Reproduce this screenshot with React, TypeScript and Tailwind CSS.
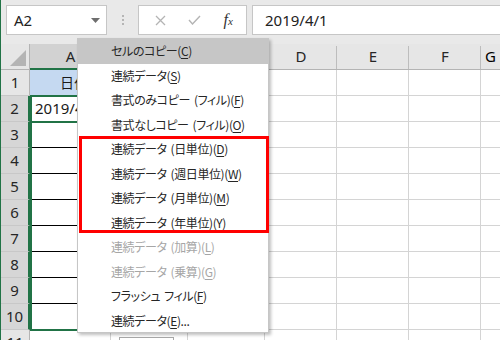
import React from "react";

const UI = "font-['Noto_Sans','Open_Sans',sans-serif]";
const JP = "font-['Noto_Sans_CJK_JP','Noto_Sans',sans-serif] [font-feature-settings:'palt']";

type Item = { pre: string; key: string; post?: string; disabled?: boolean; active?: boolean };

const items: Item[] = [
  { pre: "セルのコピー(", key: "C", post: ")", active: true },
  { pre: "連続データ(", key: "S", post: ")" },
  { pre: "書式のみコピー (フィル)(", key: "F", post: ")" },
  { pre: "書式なしコピー (フィル)(", key: "O", post: ")" },
  { pre: "連続データ (日単位)(", key: "D", post: ")" },
  { pre: "連続データ (週日単位)(", key: "W", post: ")" },
  { pre: "連続データ (月単位)(", key: "M", post: ")" },
  { pre: "連続データ (年単位)(", key: "Y", post: ")" },
  { pre: "連続データ (加算)(", key: "L", post: ")", disabled: true },
  { pre: "連続データ (乗算)(", key: "G", post: ")", disabled: true },
  { pre: "フラッシュ フィル(", key: "F", post: ")" },
  { pre: "連続データ(", key: "E", post: ")..." },
];

function Pre({ text }: { text: string }) {
  const parts = text.split(" ");
  return (
    <>
      {parts.map((p, i) => (
        <React.Fragment key={i}>
          {i > 0 && <span className="inline-block w-[4px]" />}
          {p}
        </React.Fragment>
      ))}
    </>
  );
}

function Row({ n }: { n: number }) {
  const sel = n >= 2 && n <= 10;
  const isA1 = n === 1;
  const aBlack = n >= 2 && n <= 9;
  return (
    <div className="flex h-[26px] shrink-0">
      <div
        className={`w-[29px] shrink-0 flex items-center justify-center border-b border-[#c8c8c8] text-[15px] text-[#262626] ${UI} ${
          sel ? "bg-[#d6d6d6] border-r-2 border-r-[#217346]" : "bg-[#e6e6e6] border-r border-r-[#b4b4b4]"
        }`}
      >
        {n}
      </div>
      <div
        className={`w-[81px] shrink-0 border-r border-[#d4d4d4] flex items-center ${
          isA1 ? "bg-[#c5d9f1] border-b border-b-[#d4d4d4] justify-center" : "bg-white"
        } ${aBlack ? "border-b border-b-black" : n > 9 ? "border-b border-b-[#d4d4d4]" : ""} ${UI} text-[15px] text-[#1a1a1a]`}
      >
        {isA1 ? <span className={JP + " text-[14px] pl-[8px]"}>日付</span> : n === 2 ? <span className="pl-[5px]">2019/4/1</span> : null}
      </div>
      <div className="w-[77px] shrink-0 border-r border-b border-[#d4d4d4] bg-white" />
      <div className="w-[77px] shrink-0 border-r border-b border-[#d4d4d4] bg-white" />
      <div className="w-[72px] shrink-0 border-r border-b border-[#d4d4d4] bg-white" />
      <div className="w-[72px] shrink-0 border-r border-b border-[#d4d4d4] bg-white" />
      <div className="w-[72px] shrink-0 border-r border-b border-[#d4d4d4] bg-white" />
      <div className="flex-1 border-b border-[#d4d4d4] bg-white" />
    </div>
  );
}

function ColHead({ w, label, sel }: { w: string; label: string; sel?: boolean }) {
  return (
    <div
      className={`${w} shrink-0 flex items-center justify-center text-[15px] text-[#262626] ${UI} relative ${
        sel ? "bg-[#d2d2d2] border-b-2 border-b-[#217346]" : "bg-[#e6e6e6] border-b border-b-[#b4b4b4]"
      }`}
    >
      <div className="absolute right-0 top-[2px] bottom-0 w-px bg-[#bdbdbd]" />
      {label}
    </div>
  );
}

export default function App() {
  return (
    <div className="relative w-[500px] h-[340px] overflow-hidden bg-white border-l border-[#217346]">
      {/* top bar */}
      <div className="h-[44px] bg-[#e9e9e9] flex items-start pt-[5px] pl-[5px]">
        <div className="w-[101px] h-[30px] bg-white border border-[#c6c6c6] flex items-center justify-between pl-[7px] pr-[6px]">
          <span className={`${UI} text-[15px] text-[#222]`}>A2</span>
          <svg width="9" height="5" viewBox="0 0 9 5">
            <path d="M0 0 L9 0 L4.5 5 Z" fill="#6e6e6e" />
          </svg>
        </div>
        <div className="w-[31px] h-[30px] flex flex-col items-center justify-center gap-[2px]">
          <div className="w-[2px] h-[2px] bg-[#b5b5b5]" />
          <div className="w-[2px] h-[2px] bg-[#b5b5b5]" />
          <div className="w-[2px] h-[2px] bg-[#b5b5b5]" />
        </div>
        <div className="w-[109px] h-[30px] bg-white border border-[#c6c6c6] flex items-center">
          <div className="w-[40px] flex justify-center pl-[4px]">
            <svg width="11" height="11" viewBox="0 0 11 11">
              <path d="M1 1 L10 10 M10 1 L1 10" stroke="#b4b4b4" strokeWidth="1.3" />
            </svg>
          </div>
          <div className="w-[32px] flex justify-center">
            <svg width="13" height="10" viewBox="0 0 13 10">
              <path d="M1 5 L4.5 9 L12 1" stroke="#b4b4b4" strokeWidth="1.4" fill="none" />
            </svg>
          </div>
          <div className="w-[36px] flex justify-center">
            <span className="font-['Liberation_Serif',serif] italic text-[16px] text-[#333] leading-none">
              f<span className="text-[11px]">x</span>
            </span>
          </div>
        </div>
        <div className="flex-1 ml-[5px] -mr-[4px] h-[30px] bg-white border border-[#c6c6c6] flex items-center pl-[12px]">
          <span className={`${UI} text-[15px] text-[#222]`}>2019/4/1</span>
        </div>
      </div>

      {/* column header */}
      <div className="flex h-[26px]">
        <div className="w-[29px] shrink-0 bg-[#e6e6e6] border-b border-r border-[#b4b4b4] relative">
          <svg className="absolute left-[9px] bottom-[3px]" width="16" height="16" viewBox="0 0 16 16">
            <path d="M16 0 L16 16 L0 16 Z" fill="#b4b4b4" />
          </svg>
        </div>
        <ColHead w="w-[81px]" label="A" sel />
        <ColHead w="w-[77px]" label="B" />
        <ColHead w="w-[77px]" label="C" />
        <ColHead w="w-[72px]" label="D" />
        <ColHead w="w-[72px]" label="E" />
        <ColHead w="w-[72px]" label="F" />
        <div className="flex-1 bg-[#e6e6e6] border-b border-b-[#b4b4b4] flex items-center justify-center text-[15px]">G</div>
      </div>

      {Array.from({ length: 11 }, (_, i) => (
        <Row key={i} n={i + 1} />
      ))}

      {/* selection border A2:A10 */}
      <div className="absolute left-[29px] top-[95px] w-[83px] h-[236px] border-2 border-[#217346]" />
      <div className="absolute left-[29px] top-[121px] w-[83px] h-[2px] bg-[#217346]" />

      {/* auto fill options button */}
      <div className="absolute left-[118px] top-[337px] w-[55px] h-[20px] bg-white border border-[#a8a8a8]" />

      {/* context menu */}
      <div className="absolute left-[76px] top-[38px] w-[192px] h-[295px] bg-white border border-[#c6c6c6] shadow-[2px_2px_3px_rgba(0,0,0,0.25)] flex flex-col">
        {items.map((it, i) => (
          <div
            key={i}
            className={`h-[24.5px] shrink-0 flex items-center pl-[33px] text-[12px] tracking-[-0.4px] ${JP} ${
              it.active ? "bg-[#c6c6c6]" : ""
            } ${it.disabled ? "text-[#a6a6a6]" : "text-[#262626]"}`}
          >
            <span className="whitespace-pre">
              <Pre text={it.pre} />
              <span className="underline underline-offset-2">{it.key}</span>
              {it.post}
            </span>
          </div>
        ))}
      </div>

      {/* red annotation */}
      <div className="absolute left-[78px] top-[136px] w-[190px] h-[97px] border-[3px] border-[#ff0000]" />
    </div>
  );
}
